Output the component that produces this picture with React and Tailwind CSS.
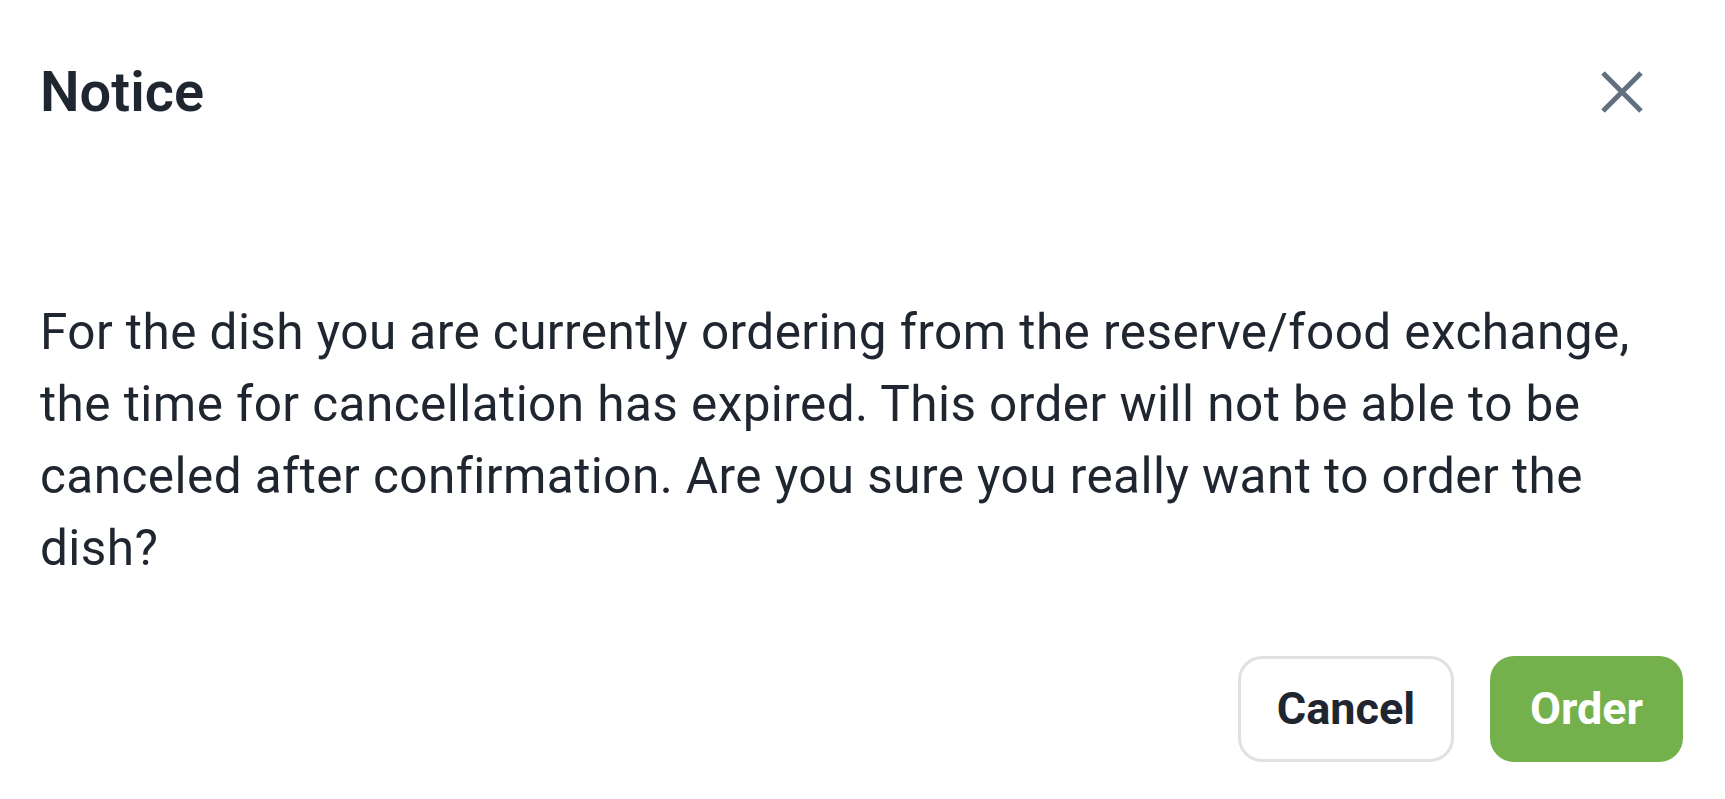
import React from "react";

export default function App() {
  return (
    <div
      className="w-[1725px] h-[799px] bg-white flex flex-col text-[#1f2630] overflow-hidden"
      style={{ fontFamily: "Roboto, 'Liberation Sans', sans-serif" }}
    >
      <div className="flex items-center justify-between pl-[40px] pr-[80px] pt-[59px]">
        <h1 className="text-[56px] leading-[66px] font-semibold">Notice</h1>
        <button className="w-[46px] h-[46px] flex items-center justify-center text-[#627080]">
          <svg width="46" height="46" viewBox="0 0 46 46" fill="none">
            <path d="M4 4 L42 42 M42 4 L4 42" stroke="currentColor" strokeWidth="5" />
          </svg>
        </button>
      </div>
      <p className="mt-[171px] pl-[40px] pr-[50px] text-[49.5px] leading-[72px] tracking-[0.43px]">
        For the dish you are currently ordering from the reserve/food exchange, the time for cancellation has expired. This order will not be able to be canceled after confirmation. Are you sure you really want to order the dish?
      </p>
      <div className="flex justify-end gap-[36px] pr-[42px] mt-[72px]">
        <button className="h-[106px] w-[216px] rounded-[24px] border-[3px] border-[#dfe1e5] bg-white text-[45px] font-bold text-[#1f2630]">
          Cancel
        </button>
        <button className="h-[106px] w-[193px] rounded-[24px] bg-[#74b14c] text-[45px] font-bold text-white">
          Order
        </button>
      </div>
    </div>
  );
}
